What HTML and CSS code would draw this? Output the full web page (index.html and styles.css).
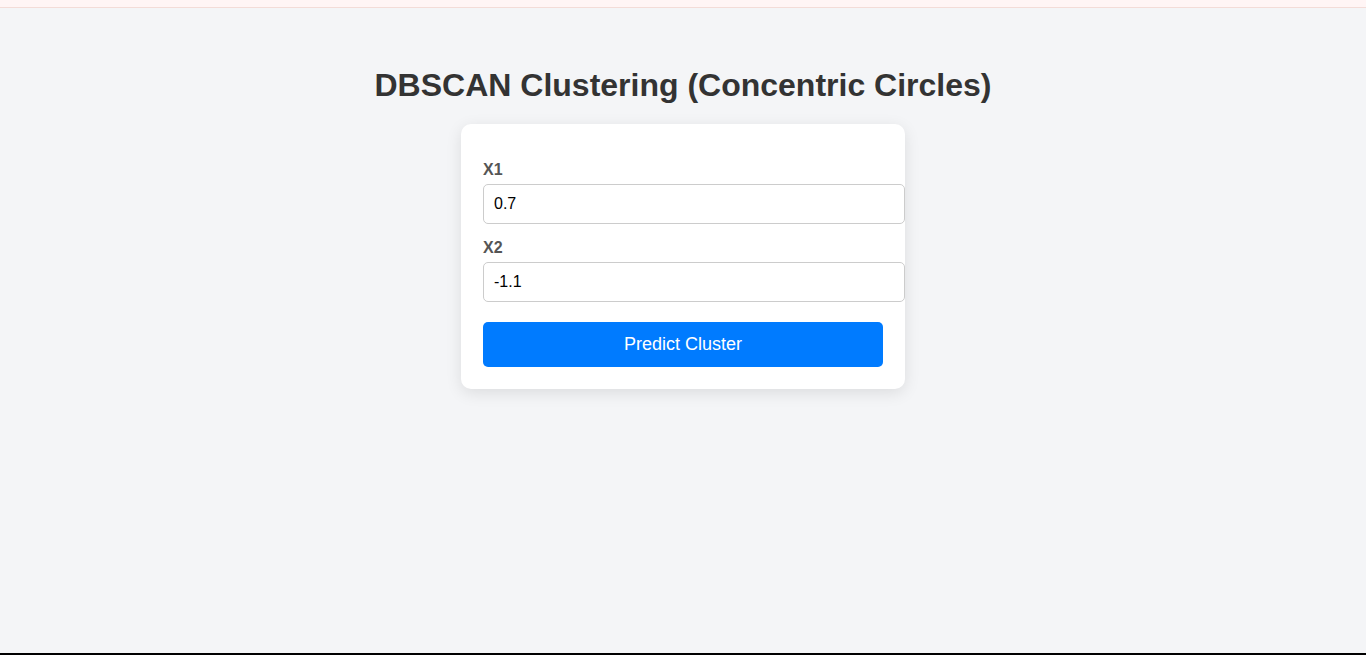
FILE: index.html
```html
<!DOCTYPE html>
<html>
<head>
<meta charset="utf-8">
<title>DBSCAN Clustering</title>
<link rel="stylesheet" href="styles.css">
</head>
<body>
<div class="topbar"></div>
<main class="page">
  <h1 class="title">DBSCAN Clustering (Concentric Circles)</h1>
  <form class="card">
    <label class="field-label" for="x1">X1</label>
    <input class="field-input" id="x1" type="text" value="0.7">
    <label class="field-label" for="x2">X2</label>
    <input class="field-input" id="x2" type="text" value="-1.1">
    <button class="btn" type="button">Predict Cluster</button>
  </form>
</main>
<div class="bottombar"></div>
</body>
</html>
```
FILE: styles.css
```css
html, body {
  margin: 0;
  padding: 0;
  height: 100%;
}
body {
  background: #f4f5f7;
  font-family: "Liberation Sans", Arial, sans-serif;
  display: flex;
  flex-direction: column;
}
.topbar {
  height: 7px;
  background: #fff5f5;
  border-bottom: 1px solid #f3dcd8;
  flex: none;
}
.page {
  flex: 1;
  display: flex;
  flex-direction: column;
  align-items: center;
}
.title {
  margin: 59px 0 20px;
  font-size: 32px;
  font-weight: bold;
  color: #333;
  line-height: 37px;
}
.card {
  box-sizing: content-box;
  width: 400px;
  padding: 22px 22px 22px;
  background: #fff;
  border-radius: 10px;
  box-shadow: 0 4px 16px rgba(0, 0, 0, 0.1);
}
.field-label {
  display: block;
  margin: 15px 0 5px;
  font-size: 16px;
  font-weight: bold;
  color: #555;
  line-height: 18px;
}
.field-input {
  display: block;
  width: 100%;
  box-sizing: content-box;
  padding: 10px;
  margin: 0;
  font-family: "Liberation Sans", Arial, sans-serif;
  font-size: 16px;
  line-height: 18px;
  color: #000;
  border: 1px solid #ccc;
  border-radius: 5px;
  background: #fff;
  outline: none;
}
.btn {
  display: block;
  width: 100%;
  height: 45px;
  margin-top: 20px;
  padding: 0;
  border: none;
  border-radius: 5px;
  background: #007bff;
  color: #fff;
  font-family: "Liberation Sans", Arial, sans-serif;
  font-size: 18px;
  cursor: pointer;
}
.bottombar {
  height: 2px;
  background: #000;
  flex: none;
}
```
